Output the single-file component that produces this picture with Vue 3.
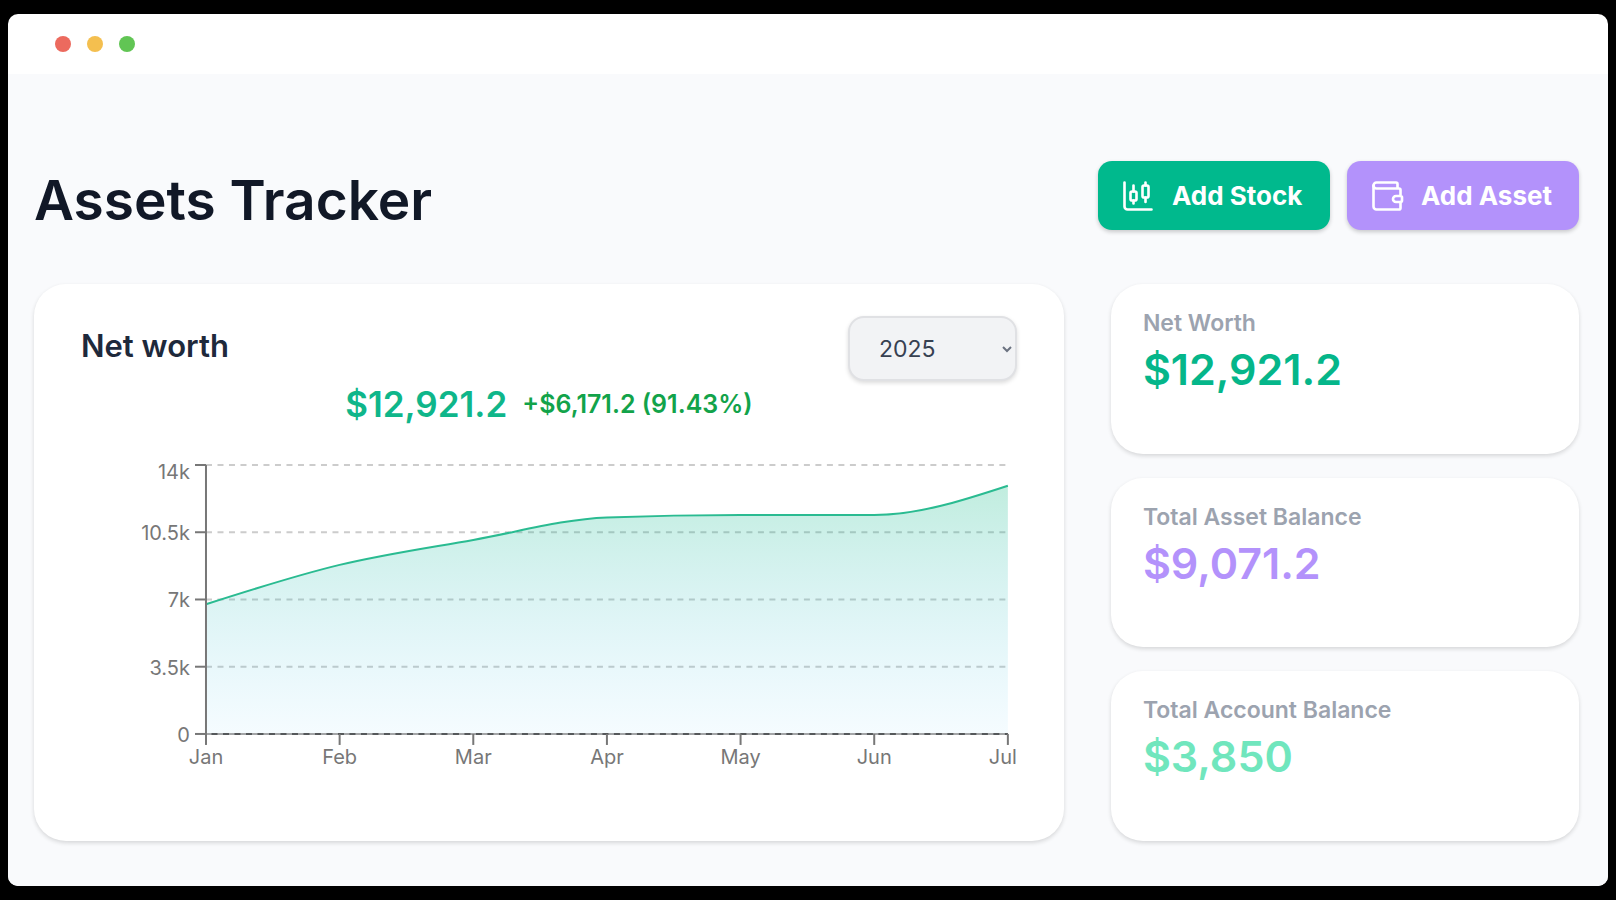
<script setup>
import { ref, computed } from 'vue'

const year = ref('2025')
const years = ['2025', '2024', '2023']

const plot = { left: 125, right: 927, top: 15, bottom: 284, max: 14000 }
const series = [
  { month: 'Jan', value: 6750 },
  { month: 'Feb', value: 8800 },
  { month: 'Mar', value: 10100 },
  { month: 'Apr', value: 11270 },
  { month: 'May', value: 11400 },
  { month: 'Jun', value: 11400 },
  { month: 'Jul', value: 12921.2 },
]
const yOf = (v) => plot.bottom - (v / plot.max) * (plot.bottom - plot.top)
const points = series.map((d, i) => ({
  x: plot.left + ((plot.right - plot.left) * i) / (series.length - 1),
  y: yOf(d.value),
  month: d.month,
}))
const yTicks = [
  { label: '14k', value: 14000 },
  { label: '10.5k', value: 10500 },
  { label: '7k', value: 7000 },
  { label: '3.5k', value: 3500 },
  { label: '0', value: 0 },
].map((t) => ({ label: t.label, y: yOf(t.value) }))

// Monotone cubic interpolation through the points
const linePath = computed(() => {
  const n = points.length
  const slope = []
  for (let i = 0; i < n - 1; i++) {
    slope.push((points[i + 1].y - points[i].y) / (points[i + 1].x - points[i].x))
  }
  const tangent = new Array(n).fill(0)
  for (let i = 1; i < n - 1; i++) {
    const a = slope[i - 1]
    const b = slope[i]
    tangent[i] = a * b <= 0 ? 0 : Math.sign(a) * Math.min(Math.abs(a), Math.abs(b), Math.abs(a + b) / 4) * 2
  }
  tangent[0] = (3 * slope[0] - tangent[1]) / 2
  tangent[n - 1] = (3 * slope[n - 2] - tangent[n - 2]) / 2
  let d = `M${points[0].x},${points[0].y}`
  for (let i = 0; i < n - 1; i++) {
    const p = points[i]
    const q = points[i + 1]
    const h = (q.x - p.x) / 3
    d += `C${p.x + h},${p.y + h * tangent[i]} ${q.x - h},${q.y - h * tangent[i + 1]} ${q.x},${q.y}`
  }
  return d
})
const areaPath = computed(() => `${linePath.value}L${plot.right},${plot.bottom}L${plot.left},${plot.bottom}Z`)

const stats = [
  { label: 'Net Worth', value: '$12,921.2', tone: 'green' },
  { label: 'Total Asset Balance', value: '$9,071.2', tone: 'purple' },
  { label: 'Total Account Balance', value: '$3,850', tone: 'mint' },
]
</script>

<template>
  <div class="backdrop">
    <div class="window">
      <div class="titlebar">
        <span class="dot red"></span>
        <span class="dot yellow"></span>
        <span class="dot lime"></span>
      </div>
      <main class="page">
        <header class="head">
          <h1>Assets Tracker</h1>
          <div class="actions">
            <button type="button" class="btn stock">
              <svg class="icon" viewBox="0 0 24 24" aria-hidden="true">
                <path d="M3 3v16a2 2 0 0 0 2 2h16" />
                <path d="M9 5v4M9 15v2M17 3v2M17 13v3" />
                <rect x="7" y="9" width="4" height="6" rx="1" />
                <rect x="15" y="5" width="4" height="8" rx="1" />
              </svg>
              Add Stock
            </button>
            <button type="button" class="btn asset">
              <svg class="icon" viewBox="0 0 24 24" aria-hidden="true">
                <path d="M19 7V4a1 1 0 0 0-1-1H5a2 2 0 0 0 0 4h15a1 1 0 0 1 1 1v4h-3a2 2 0 0 0 0 4h3a1 1 0 0 0 1-1v-2a1 1 0 0 0-1-1" />
                <path d="M3 5v14a2 2 0 0 0 2 2h15a1 1 0 0 0 1-1v-4" />
              </svg>
              Add Asset
            </button>
          </div>
        </header>

        <div class="board">
          <section class="card chart-card">
            <div class="chart-head">
              <h2>Net worth</h2>
              <div class="picker">
                <select v-model="year" aria-label="Year">
                  <option v-for="y in years" :key="y" :value="y">{{ y }}</option>
                </select>
                <svg class="chevron" viewBox="0 0 12 8" aria-hidden="true"><path d="M2 2l4 4 4-4" /></svg>
              </div>
            </div>
            <p class="figures">
              <span class="total">$12,921.2</span>
              <span class="change">+$6,171.2 (91.43%)</span>
            </p>
            <svg class="chart" viewBox="0 0 936 320" role="img" aria-label="Net worth by month">
              <defs>
                <linearGradient id="worth-fill" x1="0" y1="0" x2="0" y2="1">
                  <stop offset="0" stop-color="#10b981" stop-opacity="0.26" />
                  <stop offset="1" stop-color="#38bdf8" stop-opacity="0.05" />
                </linearGradient>
              </defs>
              <line v-for="t in yTicks" :key="t.label" class="grid" :x1="plot.left" :x2="plot.right" :y1="t.y" :y2="t.y" />
              <path :d="areaPath" fill="url(#worth-fill)" />
              <path :d="linePath" class="line" />
              <line class="base" :x1="plot.left" :x2="plot.right" :y1="plot.bottom" :y2="plot.bottom" />
              <line class="base dashes" :x1="plot.left" :x2="plot.right" :y1="plot.bottom" :y2="plot.bottom" />
              <path class="axis" :d="`M${plot.left} ${plot.top}V${plot.bottom}`" />
              <g v-for="t in yTicks" :key="'y' + t.label">
                <path class="axis" :d="`M${plot.left - 11} ${t.y}H${plot.left}`" />
                <text x="109" :y="t.label === '14k' ? t.y + 14 : t.y + 8" text-anchor="end">{{ t.label }}</text>
              </g>
              <g v-for="(p, i) in points" :key="p.month">
                <path class="axis" :d="`M${p.x} ${plot.bottom}v11`" />
                <text :x="i === points.length - 1 ? 936 : p.x" y="314" :text-anchor="i === points.length - 1 ? 'end' : 'middle'">{{ p.month }}</text>
              </g>
            </svg>
          </section>

          <aside class="stats">
            <section v-for="s in stats" :key="s.label" class="card stat">
              <h3>{{ s.label }}</h3>
              <p :class="s.tone">{{ s.value }}</p>
            </section>
          </aside>
        </div>
      </main>
    </div>
  </div>
</template>

<style>
body {
  margin: 0;
  background: #000;
}
</style>

<style scoped>
.backdrop {
  box-sizing: border-box;
  min-height: 100vh;
  padding: 14px 8px;
  display: flex;
  background: #000;
  font-family: Inter, "Open Sans", sans-serif;
}
.window {
  flex: 1;
  min-width: 0;
  display: flex;
  flex-direction: column;
  background: #fff;
  border-radius: 10px;
  overflow: hidden;
}
.titlebar {
  height: 60px;
  display: flex;
  align-items: center;
  gap: 16px;
  padding-left: 47px;
}
.dot {
  width: 16px;
  height: 16px;
  border-radius: 50%;
}
.red { background: #ec6a5e; }
.yellow { background: #f4bf4f; }
.lime { background: #61c554; }
.page {
  flex: 1;
  padding: 87px 29px 40px 26px;
  background: #f9fafc;
}
h1, h2, h3, p { margin: 0; }
.head {
  display: flex;
  align-items: flex-end;
  justify-content: space-between;
  margin-bottom: 54px;
}
h1 {
  font-size: 55px;
  line-height: 60px;
  font-weight: 600;
  color: #111827;
}
.actions {
  display: flex;
  gap: 17px;
}
.btn {
  display: flex;
  align-items: center;
  gap: 16px;
  min-width: 232px;
  height: 69px;
  padding: 0 22px;
  border: 0;
  border-radius: 14px;
  color: #fff;
  font-family: inherit;
  font-size: 26px;
  font-weight: 700;
  white-space: nowrap;
  box-shadow: 0 2px 4px rgba(0, 0, 0, 0.2);
}
.stock { background: #00b98d; }
.asset { background: #b392fb; }
.icon {
  width: 36px;
  height: 36px;
  flex: none;
  fill: none;
  stroke: #fff;
  stroke-width: 1.75;
  stroke-linecap: round;
  stroke-linejoin: round;
}
.board {
  display: grid;
  grid-template-columns: 11fr 5fr;
  gap: 47px;
}
.card {
  background: #fff;
  border-radius: 32px;
  box-shadow: 0 2px 4px rgba(0, 0, 0, 0.14);
}
.chart-card {
  padding: 32px 47px 71px;
}
.chart-head {
  display: flex;
  justify-content: space-between;
  align-items: flex-start;
}
h2 {
  font-size: 31px;
  line-height: 60px;
  font-weight: 600;
  color: #1e293b;
}
.picker {
  position: relative;
  width: 169px;
}
select {
  appearance: none;
  box-sizing: border-box;
  display: block;
  width: 100%;
  height: 65px;
  padding: 0 29px;
  border: 2px solid #e0e1e4;
  border-radius: 16px;
  background: #f2f3f5;
  color: #374151;
  font-family: inherit;
  font-size: 23px;
  box-shadow: 0 2px 4px rgba(0, 0, 0, 0.14);
}
.chevron {
  position: absolute;
  right: 4px;
  top: 29px;
  width: 12px;
  height: 8px;
  fill: none;
  stroke: #6b7280;
  stroke-width: 2;
  pointer-events: none;
}
.figures {
  display: flex;
  align-items: center;
  justify-content: center;
  gap: 15px;
  height: 46px;
  font-weight: 600;
  white-space: nowrap;
}
.total {
  font-size: 35px;
  color: #0fb68a;
}
.change {
  font-size: 25px;
  color: #12a34a;
}
.chart {
  display: block;
  width: 100%;
  margin-top: 23px;
  overflow: visible;
}
.chart text {
  font-size: 20px;
  fill: #777;
}
.grid {
  stroke: #ccc;
  stroke-width: 2;
  stroke-dasharray: 6 5.5;
}
.line {
  fill: none;
  stroke: #2abb91;
  stroke-width: 2;
}
.base {
  stroke: #a3a5a7;
  stroke-width: 2;
}
.dashes {
  stroke: #55585a;
  stroke-dasharray: 6 5.5;
  stroke-dashoffset: 6;
}
.axis {
  fill: none;
  stroke: #777;
  stroke-width: 2;
}
.stats {
  display: grid;
  grid-template-rows: repeat(3, 1fr);
  gap: 24px;
}
.stat {
  padding: 24px 32px;
}
h3 {
  font-size: 23px;
  line-height: 30px;
  font-weight: 600;
  color: #9ca3af;
}
.stat p {
  font-size: 43px;
  line-height: 62px;
  font-weight: 600;
}
.green { color: #05b68a; }
.purple { color: #b392fb; }
.mint { color: #70e6bd; }
</style>
